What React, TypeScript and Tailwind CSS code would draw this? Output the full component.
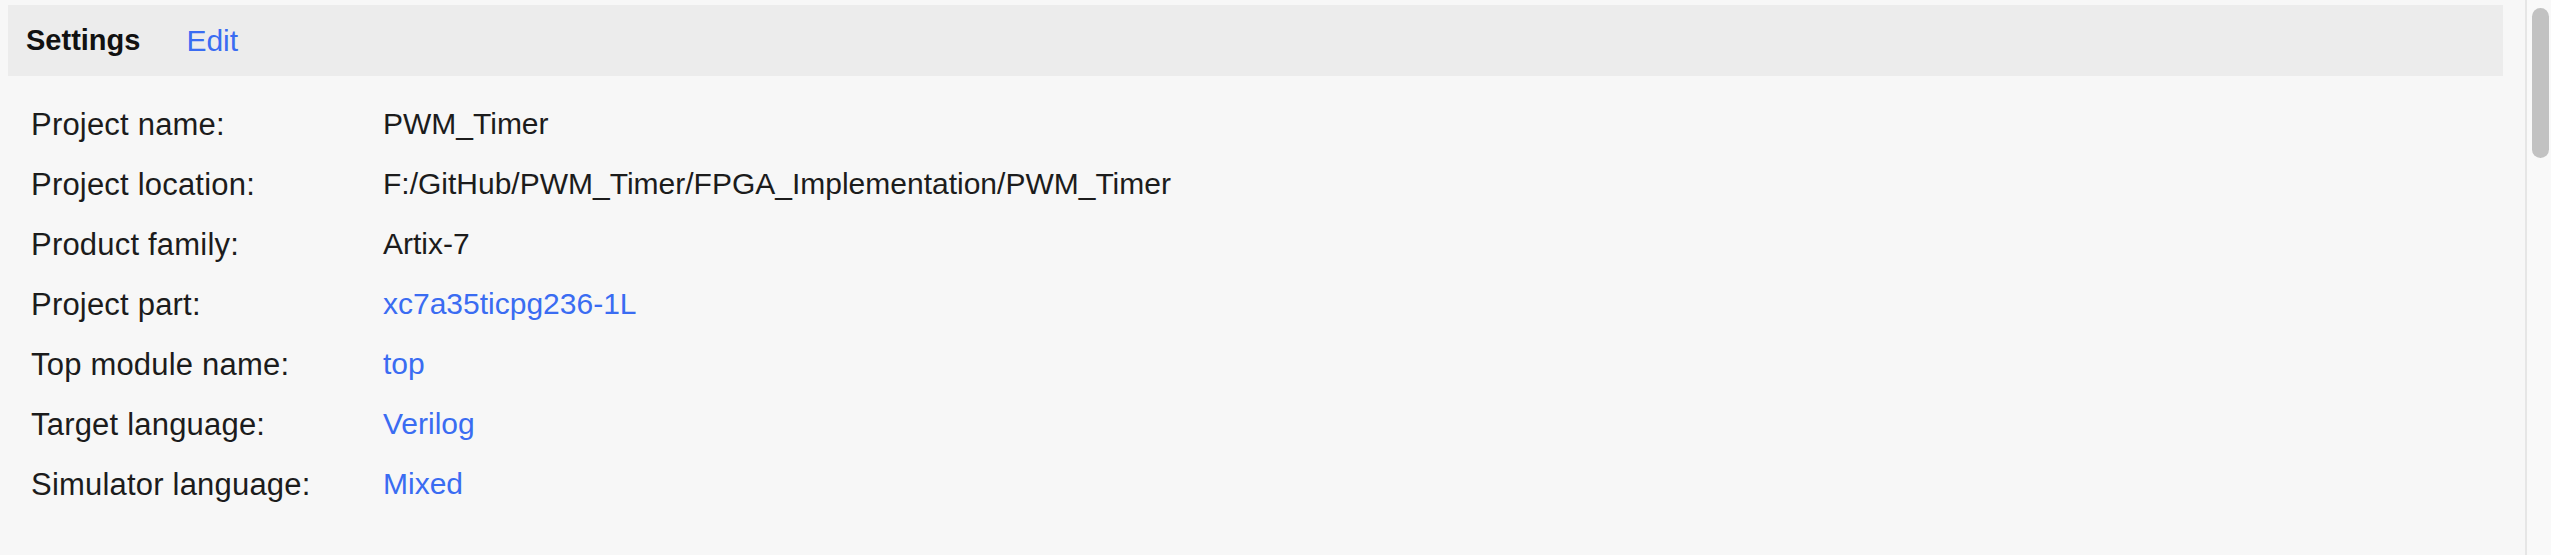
import { FC } from "react";

type Row = { label: string; value: string; link?: boolean };

const rows: Row[] = [
  { label: "Project name:", value: "PWM_Timer" },
  { label: "Project location:", value: "F:/GitHub/PWM_Timer/FPGA_Implementation/PWM_Timer" },
  { label: "Product family:", value: "Artix-7" },
  { label: "Project part:", value: "xc7a35ticpg236-1L", link: true },
  { label: "Top module name:", value: "top", link: true },
  { label: "Target language:", value: "Verilog", link: true },
  { label: "Simulator language:", value: "Mixed", link: true },
];

const SettingRow: FC<{ row: Row }> = ({ row }) => (
  <div className="flex h-[60px] items-center">
    <div className="w-[352px] shrink-0 text-[31px] tracking-[0.2px] text-[#1c1c1c]">{row.label}</div>
    <div className={row.link ? "text-[#3a6cf2]" : "text-[#1c1c1c]"}>{row.value}</div>
  </div>
);

export default function App() {
  return (
    <div className="flex h-[555px] w-full bg-[#f7f7f7] font-['Liberation_Sans',Arial,sans-serif] text-[30px] leading-none">
      <div className="flex-1 pt-[5px] pl-[8px] pr-[22px]">
        <div className="flex h-[71px] items-center bg-[#ececec] pl-[18px]">
          <span className="text-[29px] font-bold text-[#111]">Settings</span>
          <span className="ml-[46px] text-[#3a6cf2]">Edit</span>
        </div>
        <div className="mt-[18px] pl-[23px]">
          {rows.map((r) => (
            <SettingRow key={r.label} row={r} />
          ))}
        </div>
      </div>
      <div className="w-[26px] shrink-0 border-l-2 border-[#e6e6e6] bg-[#f9f9f9] pt-[8px] pl-[5px]">
        <div className="h-[150px] w-[17px] rounded-full bg-[#c2c2c2]" />
      </div>
    </div>
  );
}
